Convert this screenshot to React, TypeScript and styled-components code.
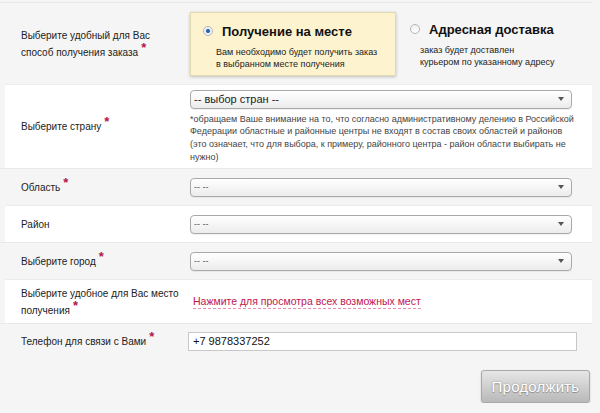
import styled, { createGlobalStyle } from 'styled-components';

const GlobalStyle = createGlobalStyle`
  html, body {
    margin: 0;
    padding: 0;
    background: #f5f5f5;
    font-family: "Liberation Sans", Arial, sans-serif;
    color: #222;
  }
`;

const Form = styled.div`
  width: 592px;
  padding-top: 2px;
`;

const Row = styled.div<{ $white?: boolean; $h: number }>`
  display: grid;
  grid-template-columns: 169px minmax(0, 1fr);
  align-items: center;
  min-height: ${(p) => p.$h}px;
  box-sizing: border-box;
  margin-left: ${(p) => (p.$white ? '5px' : '0')};
  padding-left: ${(p) => (p.$white ? '16px' : '21px')};
  padding-right: 20px;
  background: ${(p) => (p.$white ? '#fff' : 'transparent')};
  border-top: 1px solid ${(p) => (p.$white ? '#ececec' : '#e9e9e9')};
`;

const Label = styled.div`
  font-size: 10px;
  line-height: 17px;
  color: #222;
`;

const Star = styled.span`
  color: #b3124a;
  font-size: 13px;
  font-weight: bold;
  vertical-align: 4px;
  margin-left: 3px;
  line-height: 0;
`;

const Options = styled.div`
  display: flex;
  align-items: center;
  gap: 6px;
`;

const Option = styled.div<{ $active?: boolean }>`
  flex: none;
  width: 206px;
  height: 64px;
  box-sizing: border-box;
  padding: ${(p) => (p.$active ? '11px 0 0 12px' : '9px 0 0 7px')};
  background: ${(p) => (p.$active ? '#fdf3cf' : 'transparent')};
  border: 1px solid ${(p) => (p.$active ? '#e3d9b1' : 'transparent')};
  box-shadow: ${(p) => (p.$active ? '0 1px 3px rgba(0,0,0,0.22)' : 'none')};
`;

const OptionHead = styled.div`
  display: flex;
  align-items: center;
  gap: 9px;
`;

const Radio = styled.span<{ $checked?: boolean }>`
  width: 8px;
  height: 8px;
  border-radius: 50%;
  border: 1px solid #b5b5b5;
  background: ${(p) =>
    p.$checked
      ? 'radial-gradient(circle, #1f4f95 0, #3a6fb8 1.6px, #dfe6ef 2.4px, #fafafa 4px)'
      : 'linear-gradient(#f0f0f0, #fff)'};
  flex: none;
`;

const OptionTitle = styled.div`
  font-size: 13px;
  line-height: 15px;
  font-weight: bold;
  color: #111;
`;

const OptionText = styled.div<{ $indent: number }>`
  margin-top: 7px;
  padding-left: ${(p) => p.$indent}px;
  font-size: 9px;
  line-height: 12px;
  color: #222;
  white-space: nowrap;
`;

const Field = styled.div`
  display: flex;
  flex-direction: column;
`;

const Select = styled.div<{ $muted?: boolean }>`
  height: 19px;
  box-sizing: border-box;
  display: flex;
  align-items: center;
  justify-content: space-between;
  padding: 0 7px 0 3px;
  border: 1px solid #a9a9a9;
  border-radius: 4px;
  background: linear-gradient(#ffffff, #ececec);
  box-shadow: inset 0 1px 0 #fff, 0 1px 1px rgba(0,0,0,0.06);
  font-size: ${(p) => (p.$muted ? '9px' : '11px')};
  color: ${(p) => (p.$muted ? '#555' : '#222')};
`;

const Arrow = styled.span`
  width: 0;
  height: 0;
  border-left: 3px solid transparent;
  border-right: 3px solid transparent;
  border-top: 4px solid #555;
`;

const Note = styled.div`
  margin-top: 4px;
  font-size: 9px;
  line-height: 12.7px;
  color: #444;
  white-space: nowrap;
`;

const Link = styled.a`
  justify-self: start;
  margin-left: 3px;
  font-size: 10.5px;
  color: #c0164f;
  text-decoration: none;
  border-bottom: 1px dashed #e88eae;
  line-height: 13px;
`;

const Input = styled.div`
  height: 19px;
  box-sizing: border-box;
  margin-left: -2px;
  margin-right: -5px;
  padding: 0 4px;
  display: flex;
  align-items: center;
  background: #fff;
  border: 1px solid #c8c8c8;
  font-size: 11px;
  color: #111;
`;

const Footer = styled.div`
  display: flex;
  justify-content: flex-end;
  padding-top: 12px;
  padding-right: 2px;
`;

const Button = styled.button`
  width: 109px;
  height: 33px;
  border: 1px solid #a8a8a8;
  border-radius: 3px;
  background: linear-gradient(#e6e6e6, #b9b9b9);
  box-shadow: 0 1px 2px rgba(0,0,0,0.2);
  font-family: "Liberation Sans", Arial, sans-serif;
  font-size: 15px;
  color: #fff;
  text-shadow: 0 0 2px #8a8a8a, 0 1px 0 #999;
  letter-spacing: 0.2px;
`;

export default function App() {
  return (
    <>
      <GlobalStyle />
      <Form>
        <Row $h={82}>
          <Label>
            Выберите удобный для Вас
            <br />
            способ получения заказа<Star>*</Star>
          </Label>
          <Options>
            <Option $active>
              <OptionHead>
                <Radio $checked />
                <OptionTitle>Получение на месте</OptionTitle>
              </OptionHead>
              <OptionText $indent={13}>
                Вам необходимо будет получить заказ
                <br />в выбранном месте получения
              </OptionText>
            </Option>
            <Option>
              <OptionHead>
                <Radio />
                <OptionTitle>Адресная доставка</OptionTitle>
              </OptionHead>
              <OptionText $indent={10}>
                заказ будет доставлен
                <br />
                курьером по указанному адресу
              </OptionText>
            </Option>
          </Options>
        </Row>

        <Row $white $h={84}>
          <Label>
            Выберите страну<Star>*</Star>
          </Label>
          <Field>
            <Select>
              -- выбор стран --
              <Arrow />
            </Select>
            <Note>
              *обращаем Ваше внимание на то, что согласно административному делению в Российской
              <br />
              Федерации областные и районные центры не входят в состав своих областей и районов
              <br />
              (это означает, что для выбора, к примеру, районного центра - район области выбирать не
              <br />
              нужно)
            </Note>
          </Field>
        </Row>

        <Row $h={37}>
          <Label>
            Область<Star>*</Star>
          </Label>
          <Select $muted>
            -- --
            <Arrow />
          </Select>
        </Row>

        <Row $white $h={37}>
          <Label>Район</Label>
          <Select $muted>
            -- --
            <Arrow />
          </Select>
        </Row>

        <Row $h={37}>
          <Label>
            Выберите город<Star>*</Star>
          </Label>
          <Select $muted>
            -- --
            <Arrow />
          </Select>
        </Row>

        <Row $white $h={44}>
          <Label>
            Выберите удобное для Вас место
            <br />
            получения<Star>*</Star>
          </Label>
          <Link href="#">Нажмите для просмотра всех возможных мест</Link>
        </Row>

        <Row $h={35}>
          <Label>
            Телефон для связи с Вами<Star>*</Star>
          </Label>
          <Input>+7 9878337252</Input>
        </Row>

        <Footer>
          <Button>Продолжить</Button>
        </Footer>
      </Form>
    </>
  );
}
